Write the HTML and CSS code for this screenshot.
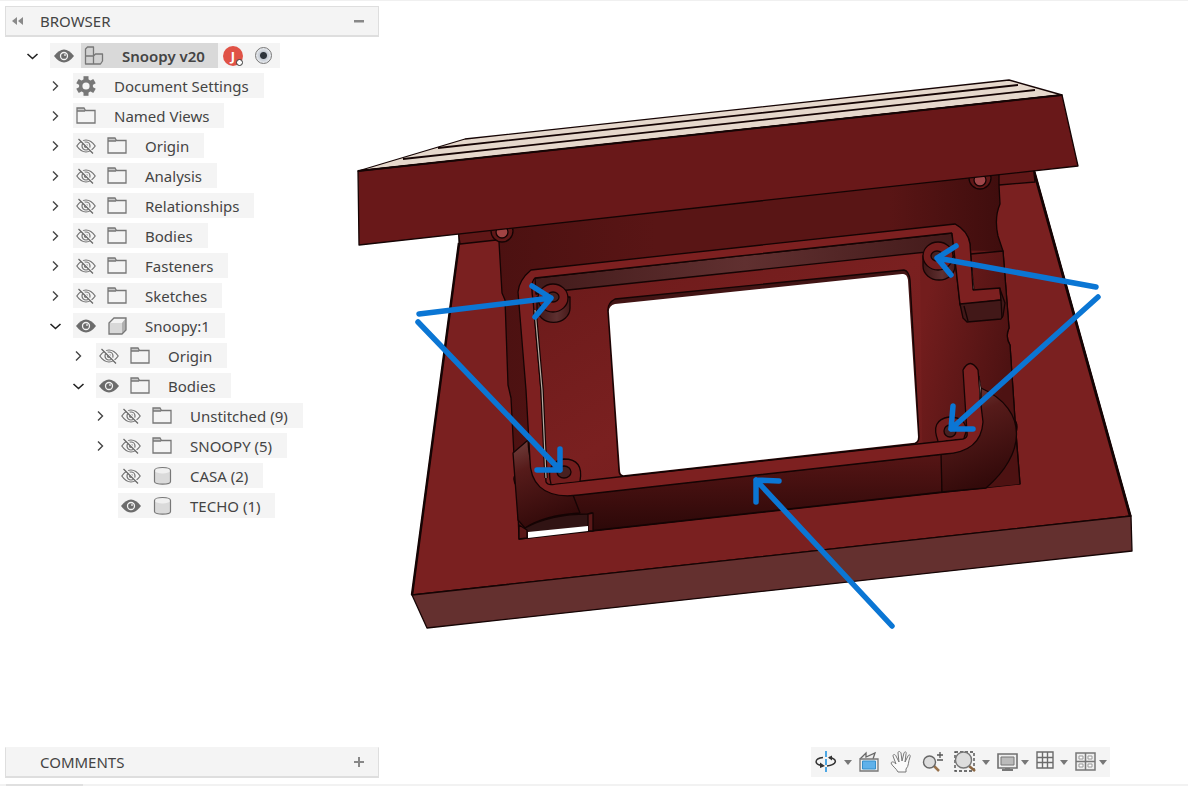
FILE: index.html
```html
<!DOCTYPE html>
<html lang="en">
<head>
<meta charset="utf-8">
<title>Snoopy v20</title>
<link rel="stylesheet" href="styles.css">
</head>
<body>
<svg class="defs" aria-hidden="true">
  <symbol id="open" viewBox="0 0 20 20"><path d="M5.500 8l5 4.500 5-4.500" fill="none" stroke="#222" stroke-width="1.600"/></symbol>
  <symbol id="closed" viewBox="0 0 20 20"><path d="M8 5.500l4.500 4.500L8 14.500" fill="none" stroke="#444" stroke-width="1.400"/></symbol>
  <symbol id="eye" viewBox="0 0 20 20"><path d="M0 10Q5 3.500 10 3.500T20 10Q15 16.500 10 16.500T0 10z" fill="#6c6c6c"/><circle cx="10" cy="10" r="3.500" fill="#6c6c6c" stroke="#f4f4f4" stroke-width="1.300"/><circle cx="11" cy="9" r="1" fill="#ddd"/></symbol>
  <symbol id="hidden" viewBox="0 0 20 20"><g fill="none" stroke="#707070" stroke-width="1.200"><path d="M.8 10Q5 4 10 4T19.200 10Q15 16 10 16T.8 10z"/><circle cx="10" cy="10" r="4"/><circle cx="10" cy="10" r="1.500"/></g><path d="M4 3l13 14" stroke="#f4f4f4" stroke-width="2.500"/><path d="M2.500 3l14.500 14.500" stroke="#666" stroke-width="1.300"/></symbol>
  <symbol id="folder" viewBox="0 0 20 20"><path d="M1 2h7l1 1.500V5H1z" fill="#c9c9c9"/><path d="M1 5V2h7l1.500 2.500H19V17H1zM1 5h8" fill="none" stroke="#777" stroke-width="1.300"/></symbol>
  <symbol id="cube" viewBox="0 0 20 20"><path d="M2 7l5-5h12v12l-4 4H2z" fill="#d8d8d8"/><path d="M2 7l5-5h12l-4 5z" fill="#f3f3f3"/><path d="M19 2v12l-4 4V7z" fill="#b0b0b0"/><path d="M2 7l5-5h12v12l-4 4H2z" fill="none" stroke="#777" stroke-width="1.300"/></symbol>
  <symbol id="body" viewBox="0 0 20 20"><path d="M2.500 4.500v11c0 3.500 16 3.500 16 0v-11z" fill="#dadada"/><ellipse cx="10.500" cy="4.500" rx="8" ry="3" fill="#f0f0f0"/><path d="M2.500 4.500c0-4 16-4 16 0v11c0 3.500-16 3.500-16 0z" fill="none" stroke="#777" stroke-width="1.200"/></symbol>
  <symbol id="gear" viewBox="0 0 20 20"><g fill="#777"><circle cx="10" cy="10" r="7"/><path d="M7.500 .2h5v19.600h-5z"/><path d="M7.500 .2h5v19.600h-5z" transform="rotate(60 10 10)"/><path d="M7.500 .2h5v19.600h-5z" transform="rotate(120 10 10)"/></g><circle cx="10" cy="10" r="3.600" fill="#f4f4f4"/></symbol>
  <symbol id="assembly" viewBox="0 0 20 20"><path d="M1.500 10V3l2-2h6v9zM1.500 10h8v8h-8zM9.500 10l2-2h7v7l-2 3h-7z" fill="#d2d2d2" stroke="#777" stroke-width="1.300" stroke-linejoin="round"/></symbol>
</svg>

<main class="app">
  <svg class="scene" viewBox="0 0 1188 786" role="img" aria-label="Enclosure base with arrows to its four screw posts and rim">
    <defs>
      <linearGradient id="wall" x1="0" x2="1"><stop offset="0" stop-color="#4c1111"/><stop offset=".3" stop-color="#591515"/><stop offset=".75" stop-color="#591515"/><stop offset="1" stop-color="#3b0c0c"/></linearGradient>
      <linearGradient id="shade" x1="0" x2="0" y1="0" y2="1"><stop offset="0" stop-color="#561515"/><stop offset="1" stop-color="#2b0808"/></linearGradient>
      <linearGradient id="band" x1="0" x2="1"><stop offset="0" stop-color="#431b1b"/><stop offset=".5" stop-color="#603030"/><stop offset="1" stop-color="#431a1a"/></linearGradient>
      <linearGradient id="floor" x1="0" x2="1" y1="0" y2="1"><stop offset="0" stop-color="#681919"/><stop offset=".5" stop-color="#7a2020"/><stop offset="1" stop-color="#6c1b1b"/></linearGradient>
      <linearGradient id="side" gradientUnits="userSpaceOnUse" x1="920" y1="330" x2="1012" y2="350"><stop offset="0" stop-color="#731d1d"/><stop offset="1" stop-color="#4d1212"/></linearGradient>
      <linearGradient id="ball" x1="0" x2=".3" y1="0" y2="1"><stop offset="0" stop-color="#73423f"/><stop offset=".35" stop-color="#561b1a"/><stop offset="1" stop-color="#330a0a"/></linearGradient>
      <linearGradient id="post" x1="0" x2="1"><stop offset="0" stop-color="#401616"/><stop offset=".6" stop-color="#5e3030"/><stop offset="1" stop-color="#481919"/></linearGradient>
    </defs>
    <g stroke="#150404" stroke-width="1.300" stroke-linejoin="round">
      <path d="M459 230V243L412 595 1131 516 1033 165z" fill="#7a2020"/>
      <path d="M459 243L412 595M1034 172L1130 516" fill="none" stroke-width="2.500"/>
      <path d="M412 595L1131 516 1132 551 427 628z" fill="#64302f"/>
      <path d="M458 230L1033 165 1035 182 999 185 460 244z" fill="#601717"/>
      <path d="M498 225L999 168V185L1000 204Q994 218 998 236L1003 251 1009 328Q1005 337 1010 345L1015 420Q1018 425 1016 433L1020 484 519 539 517 487Q512 480 515 475L511 398 508 385 505 300 502 293z" fill="url(#wall)"/>
      <path d="M532 278L952 233 960 303 967 440 560 486 546 484z" fill="url(#floor)" stroke="none"/>
      <path d="M920 250L1003 251 1009 328Q1005 337 1010 345L1015 420V434L1020 484 942 492 922 440z" fill="url(#side)" stroke="none"/>
      <path d="M971 254L1003 251 1009 328Q1005 337 1010 345L1015 420Q1018 425 1016 433L1020 484" fill="none"/>
      <path d="M573 495L942 454V492L580 532z" fill="url(#shade)"/>
      <path d="M941 454Q975 452 981 425V388C1030 410 1025 455 986 488L942 492z" fill="url(#ball)"/>
      <path d="M513 453L528 440Q530 495 573 495L580 513Q545 515 525 528L518 520z" fill="url(#ball)"/>
      <path d="M525 528Q550 514 588 514L592 513V530L527 538z" fill="#301313"/>
      <path d="M588 514L593 513V531L588 531zM519 525L527 530V538L519 539z" fill="#5a1818"/>
      <path d="M528 532L588 526V531L528 538z" fill="#fff" stroke="none"/>
      <path d="M535 278L952 233 955 249 568 290 536 294z" fill="url(#band)"/>
      <path d="M518 292Q519 280 531 270L955 224Q968 231 970 244L973 290 1000 288 1001 300 960 305 952 233 535 278Q530 282 533 300L541 390 546 482Q548 486 555 484L963 439Q968 438 967 433L963 370Q970 357 978 370L981 405 983 422Q981 452 945 454L579 495C540 500 530 480 530 460L526 390z" fill="#7d2020"/>
      <path d="M970 250L974 289 971 289z" fill="#d8d2cc" stroke-width=".8"/>
      <path d="M979 376L981 388 980 400z" fill="#d8d2cc" stroke-width=".8"/>
      <path d="M960 304L1001 300 1000 289 1005 303 1003 316 1001 319 967 322 963 318z" fill="#421818"/>
      <path d="M964 306L968 321M1001 300L1002 318" fill="none"/>
      <path d="M535 310L542 390 546 478" fill="none" stroke-width="3.500"/>
      <path d="M535 310L542 390 546 478" fill="none" stroke="#b8aca2" stroke-width="1.200"/>
      <path d="M608 312Q607 303 615 299L904 270Q909 271 910 280L919 437Q919 443 913 444L624 476Q619 476 619 471z" fill="#421414"/>
      <path d="M609 313Q608 306 615 304L902 274Q907 273 908 280L918 437Q918 443 912 443L625 475Q620 476 620 470z" fill="#fff" stroke="none"/>
      <path d="M537 297V308A16 14 0 0 0 570 308V297z" fill="url(#post)"/><ellipse cx="553" cy="298" rx="15" ry="14" fill="#741d1d"/><ellipse cx="553" cy="297" rx="6" ry="5" fill="#482020"/>
      <path d="M923 256V266A16 14 0 0 0 955 266V256z" fill="url(#post)"/><ellipse cx="938" cy="256" rx="15" ry="14" fill="#741d1d"/><ellipse cx="937" cy="256" rx="6" ry="5" fill="#482020"/>
      <path d="M952 233L960 303 973 290 970 244Q968 231 955 224z" fill="#7d2020" stroke="none"/>
      <path d="M952 233L960 304M955 224Q968 231 970 244L973 290" fill="none"/>
      <path d="M551 484Q545 462 564 459 584 459 580 481" fill="#741d1d"/><ellipse cx="564" cy="472" rx="7" ry="6" fill="#482020"/>
      <path d="M938 441Q930 420 949 417 967 417 966 432L964 438" fill="#741d1d"/><ellipse cx="950" cy="431" rx="6" ry="6" fill="#482020"/>
      <circle cx="502" cy="231" r="11" fill="#601717"/><circle cx="502" cy="232" r="6" fill="#a04343"/>
      <circle cx="980" cy="178" r="11" fill="#601717"/><circle cx="980" cy="180" r="6" fill="#a04649"/>
      <path d="M358 171L465 139 1009 80 1062 95z" fill="#e6d8cc"/>
      <path d="M438 148L1018 85M403 159L1035 90" fill="none" stroke-width="1.800"/>
      <path d="M358 171L1062 95 1078 166 359 245z" fill="#691819"/>
      <path d="M358 171L1062 95" stroke-width="2"/>
    </g>
    <g fill="none" stroke="#0b76d4" stroke-width="5.500" stroke-linecap="round" stroke-linejoin="round">
      <path d="M419 314L551 298M532 286L551 298 535 317"/>
      <path d="M418 322L560 470M560 449V470H537"/>
      <path d="M1096 287L937 258M956 246L937 258 951 275"/>
      <path d="M1098 297L951 429M953 406L951 429H973"/>
      <path d="M892 626L756 480M779 481L756 480V502"/>
    </g>
  </svg>

  <div class="chrome">
    <aside class="browser">
      <header class="bar">
        <button class="bar-btn collapse" aria-label="Collapse panel"><svg width="12" height="8" viewBox="0 0 12 8"><path d="M5 0v8L0 4zM11 0v8L6 4z" fill="#8a8a8a"/></svg></button>
        <h2 class="bar-title">BROWSER</h2>
        <button class="bar-btn" aria-label="Minimize"><svg width="12" height="12" viewBox="0 0 12 12"><path d="M1 5h10v2.500H1z" fill="#888"/></svg></button>
      </header>
      <ul class="tree">
        <li class="row level-0"><button class="toggle" aria-label="Collapse"><svg class="icon"><use href="#open"/></svg></button><div class="item root"><button class="slot" aria-label="Hide"><svg class="icon"><use href="#eye"/></svg></button><span class="selected"><svg class="icon"><use href="#assembly"/></svg><span class="name">Snoopy v20</span></span><span class="avatar">J<span class="status"></span></span><input class="active" type="radio" aria-label="Activate Snoopy v20" checked></div></li>
        <li class="row level-1"><button class="toggle" aria-label="Expand"><svg class="icon"><use href="#closed"/></svg></button><div class="item"><svg class="icon"><use href="#gear"/></svg><span class="name">Document Settings</span></div></li>
        <li class="row level-1"><button class="toggle" aria-label="Expand"><svg class="icon"><use href="#closed"/></svg></button><div class="item"><svg class="icon"><use href="#folder"/></svg><span class="name">Named Views</span></div></li>
        <li class="row level-1"><button class="toggle" aria-label="Expand"><svg class="icon"><use href="#closed"/></svg></button><div class="item"><button class="slot" aria-label="Show"><svg class="icon"><use href="#hidden"/></svg></button><svg class="icon"><use href="#folder"/></svg><span class="name">Origin</span></div></li>
        <li class="row level-1"><button class="toggle" aria-label="Expand"><svg class="icon"><use href="#closed"/></svg></button><div class="item"><button class="slot" aria-label="Show"><svg class="icon"><use href="#hidden"/></svg></button><svg class="icon"><use href="#folder"/></svg><span class="name">Analysis</span></div></li>
        <li class="row level-1"><button class="toggle" aria-label="Expand"><svg class="icon"><use href="#closed"/></svg></button><div class="item"><button class="slot" aria-label="Show"><svg class="icon"><use href="#hidden"/></svg></button><svg class="icon"><use href="#folder"/></svg><span class="name">Relationships</span></div></li>
        <li class="row level-1"><button class="toggle" aria-label="Expand"><svg class="icon"><use href="#closed"/></svg></button><div class="item"><button class="slot" aria-label="Show"><svg class="icon"><use href="#hidden"/></svg></button><svg class="icon"><use href="#folder"/></svg><span class="name">Bodies</span></div></li>
        <li class="row level-1"><button class="toggle" aria-label="Expand"><svg class="icon"><use href="#closed"/></svg></button><div class="item"><button class="slot" aria-label="Show"><svg class="icon"><use href="#hidden"/></svg></button><svg class="icon"><use href="#folder"/></svg><span class="name">Fasteners</span></div></li>
        <li class="row level-1"><button class="toggle" aria-label="Expand"><svg class="icon"><use href="#closed"/></svg></button><div class="item"><button class="slot" aria-label="Show"><svg class="icon"><use href="#hidden"/></svg></button><svg class="icon"><use href="#folder"/></svg><span class="name">Sketches</span></div></li>
        <li class="row level-1"><button class="toggle" aria-label="Collapse"><svg class="icon"><use href="#open"/></svg></button><div class="item"><button class="slot" aria-label="Hide"><svg class="icon"><use href="#eye"/></svg></button><svg class="icon"><use href="#cube"/></svg><span class="name">Snoopy:1</span></div></li>
        <li class="row level-2"><button class="toggle" aria-label="Expand"><svg class="icon"><use href="#closed"/></svg></button><div class="item"><button class="slot" aria-label="Show"><svg class="icon"><use href="#hidden"/></svg></button><svg class="icon"><use href="#folder"/></svg><span class="name">Origin</span></div></li>
        <li class="row level-2"><button class="toggle" aria-label="Collapse"><svg class="icon"><use href="#open"/></svg></button><div class="item"><button class="slot" aria-label="Hide"><svg class="icon"><use href="#eye"/></svg></button><svg class="icon"><use href="#folder"/></svg><span class="name">Bodies</span></div></li>
        <li class="row level-3"><button class="toggle" aria-label="Expand"><svg class="icon"><use href="#closed"/></svg></button><div class="item"><button class="slot" aria-label="Show"><svg class="icon"><use href="#hidden"/></svg></button><svg class="icon"><use href="#folder"/></svg><span class="name">Unstitched (9)</span></div></li>
        <li class="row level-3"><button class="toggle" aria-label="Expand"><svg class="icon"><use href="#closed"/></svg></button><div class="item"><button class="slot" aria-label="Show"><svg class="icon"><use href="#hidden"/></svg></button><svg class="icon"><use href="#folder"/></svg><span class="name">SNOOPY (5)</span></div></li>
        <li class="row level-3"><span class="toggle"></span><div class="item"><button class="slot" aria-label="Show"><svg class="icon"><use href="#hidden"/></svg></button><svg class="icon"><use href="#body"/></svg><span class="name">CASA (2)</span></div></li>
        <li class="row level-3"><span class="toggle"></span><div class="item"><button class="slot" aria-label="Hide"><svg class="icon"><use href="#eye"/></svg></button><svg class="icon"><use href="#body"/></svg><span class="name">TECHO (1)</span></div></li>
      </ul>
    </aside>

    <div class="bottom">
      <section class="bar comments">
        <h2 class="bar-title">COMMENTS</h2>
        <button class="bar-btn" aria-label="Expand comments"><svg width="12" height="12" viewBox="0 0 12 12"><path d="M1 5h4V1h2v4h4v2H7v4H5V7H1z" fill="#888"/></svg></button>
      </section>
      <nav class="toolbar" aria-label="Navigation">
        <div class="tool wide"><button class="tool-btn" aria-label="Orbit"><svg viewBox="0 0 24 24"><path d="M12 1v6M12 9v6M12 17v5" stroke="#4ba6e4" stroke-width="2"/><path d="M9 7.500C0 8.500 0 14.500 8 15.500M15 7.500c9 1 8.500 7-2 8.500" fill="none" stroke="#333" stroke-width="1.500"/><path d="M6 12.500l5 3.500-5 2zM18 5.500l-4 2 4 3z" fill="#333"/></svg></button><button class="caret" aria-label="Orbit options"></button></div>
        <div class="tool single"><button class="tool-btn" aria-label="Look at"><svg viewBox="0 0 24 24"><path d="M3 9l6-6v4l9-4-2 6" fill="#eee" stroke="#666" stroke-width="1.300"/><path d="M3 9h18v12H3z" fill="#eee" stroke="#777" stroke-width="1.300"/><path d="M5.500 11h13v8h-13z" fill="#5fb1ea" stroke="#348fcb"/></svg></button></div>
        <div class="tool single"><button class="tool-btn" aria-label="Pan"><svg viewBox="0 0 24 24"><path d="M9 22C7 18 3 16 2 13c1-2 3-1 5 1L4 6c0-2 2-2 3 0l3 6-1-9c0-2 2-2 3 0l1 8 2-8c1-2 3-1 2 1l-1 8 3-6c1-2 3-1 2 1-2 5-1 9-4 12v3z" fill="#fafafa" stroke="#777" stroke-width="1"/></svg></button></div>
        <div class="tool single"><button class="tool-btn" aria-label="Zoom"><svg viewBox="0 0 24 24"><path d="M13 16l5 5" stroke="#97714b" stroke-width="2.500"/><circle cx="8.500" cy="12" r="6" fill="#ddd" stroke="#666" stroke-width="1.400"/><path d="M16 5h6M19 2v6M16 10h6" stroke="#555" stroke-width="1.300"/></svg></button></div>
        <div class="tool wide"><button class="tool-btn" aria-label="Fit"><svg viewBox="0 0 24 24"><path d="M3 2h19v19H3z" fill="none" stroke="#444" stroke-width="1.300" stroke-dasharray="3 2"/><path d="M17 16l6 5" stroke="#8a6540" stroke-width="2.500"/><circle cx="11.500" cy="10" r="8" fill="#ddd" stroke="#777" stroke-width="1.400"/></svg></button><button class="caret" aria-label="Fit options"></button></div>
        <div class="tool"><button class="tool-btn" aria-label="Display settings"><svg viewBox="0 0 24 24"><path d="M3 4h19v14H3z" fill="#eee" stroke="#707070" stroke-width="1.600"/><path d="M6 7h13v8H6z" fill="#bbb" stroke="#777"/><path d="M10 18h5v1h3v2H7v-2h3z" fill="#777"/></svg></button><button class="caret" aria-label="Display options"></button></div>
        <div class="tool"><button class="tool-btn" aria-label="Grid"><svg viewBox="0 0 24 24"><path d="M3 2h16v16H3zM8.500 2v16M13.500 2v16M3 7.500h16M3 12.500h16" fill="none" stroke="#6b6b6b" stroke-width="1.400"/></svg></button><button class="caret" aria-label="Grid options"></button></div>
        <div class="tool"><button class="tool-btn" aria-label="Viewports"><svg viewBox="0 0 24 24"><path d="M3 3h19v17H3zM12.500 3v17M3 11.500h19" fill="#eee" stroke="#777" stroke-width="1.500"/><path d="M6 6h4v3H6zM15 6h4v3h-4zM6 14h4v3H6zM15 14h4v3h-4z" fill="#fff" stroke="#999"/></svg></button><button class="caret" aria-label="Viewport options"></button></div>
      </nav>
    </div>
    <div class="strip"><div class="strip-tab"></div></div>
  </div>
</main>
</body>
</html>
```
FILE: styles.css
```css
* { box-sizing: border-box; }
body { margin: 0; background: #fff; color: #444; font: 15px/20px "Noto Sans", "Open Sans", sans-serif; }
button { display: flex; align-items: center; justify-content: center; margin: 0; padding: 0; border: 0; background: none; color: inherit; font: inherit; }
svg { display: block; flex: none; }
.defs { position: absolute; width: 0; height: 0; }
.icon { width: 20px; height: 20px; }

.app { display: grid; min-height: 100vh; border-top: 1px solid #f0f0f0; overflow: hidden; }
.scene, .chrome { grid-area: 1 / 1; }
.scene { width: 100%; height: auto; margin-top: -1px; }
.chrome { display: flex; flex-direction: column; z-index: 1; padding-top: 5px; }

.browser { width: 374px; margin-left: 5px; }
.bar { display: flex; align-items: center; width: 374px; height: 31px; padding-right: 13px; background: #f4f4f4; border: 1px solid #dedede; border-bottom-width: 2px; }
.bar-title { flex: 1; margin: 0; font-size: 15px; line-height: 20px; font-weight: 400; }
.bar-btn { width: 12px; height: 20px; }
.collapse { width: 12px; margin: 0 16px 0 6px; }
.comments { margin-left: 5px; padding-left: 34px; border-top-color: #f4f4f4; }

.tree { display: flex; flex-direction: column; gap: 5px; margin: 6px 0 0; padding: 0; list-style: none; }
.row { display: flex; height: 25px; }
.level-0 { padding-left: 15px; }
.level-1 { padding-left: 38px; }
.level-2 { padding-left: 61px; }
.level-3 { padding-left: 83px; }
.toggle { width: 24px; height: 25px; margin-right: 6px; }
.item { display: flex; align-items: center; padding: 0 15px 0 3px; background: #f4f4f4; white-space: nowrap; }
.slot { width: 20px; height: 20px; margin-right: 11px; }
.name { margin-left: 18px; }
.root { padding: 0 8px 0 4px; }
.root .slot { margin-right: 7px; }
.selected { display: flex; align-items: center; height: 25px; padding: 0 13px 0 3px; background: #d9d9d9; font-weight: 600; }
.avatar { position: relative; width: 20px; height: 20px; margin: 0 12px 0 5px; border-radius: 50%; background: #e05246; color: #fff; font-size: 13px; font-weight: 700; text-align: center; }
.status { position: absolute; right: 0; bottom: 0; width: 7px; height: 7px; border: 1px solid #333; border-radius: 50%; background: #fff; }
.active { appearance: none; width: 17px; height: 17px; margin: 0; border: 1px solid #777; border-radius: 50%; background: radial-gradient(circle, #2d333b 0 3px, #c4cad3 4px, #eef0f3 8px); }

.bottom { display: flex; align-items: flex-start; justify-content: space-between; margin-top: auto; padding-right: 78px; }
.toolbar { display: flex; height: 30px; padding-right: 2px; background: #f4f4f4; }
.tool { display: flex; align-items: center; gap: 1px; padding-left: 4px; }
.wide { gap: 5px; padding-left: 3px; }
.single { padding: 0 4px; }
.tool-btn, .tool-btn svg { width: 24px; height: 24px; }
.caret { width: 10px; height: 24px; }
.caret::before { content: ""; border: 4px solid transparent; border-top: 5px solid #777; border-bottom: 0; }
.strip { height: 2px; margin-top: 6px; background: #f2f2f2; }
.strip-tab { width: 77px; height: 2px; margin-left: 6px; background: #e0e0e0; }
```
